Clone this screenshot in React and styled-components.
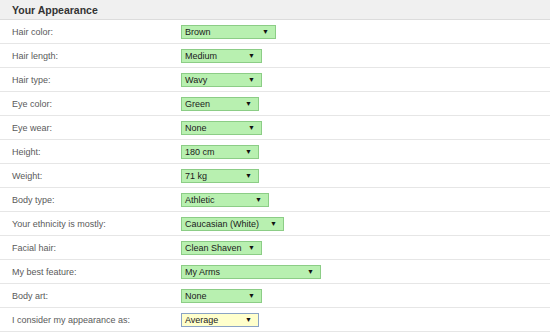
import React from 'react';
import styled, {createGlobalStyle} from 'styled-components';

const GlobalStyle = createGlobalStyle`
  body {
    margin: 0;
    background: #fff;
    font-family: "Liberation Sans", Arial, sans-serif;
  }
`

const fields = [
    {label: 'Hair color:', value: 'Brown', width: 95},
    {label: 'Hair length:', value: 'Medium', width: 81},
    {label: 'Hair type:', value: 'Wavy', width: 81},
    {label: 'Eye color:', value: 'Green', width: 78},
    {label: 'Eye wear:', value: 'None', width: 81},
    {label: 'Height:', value: '180 cm', width: 78},
    {label: 'Weight:', value: '71 kg', width: 78},
    {label: 'Body type:', value: 'Athletic', width: 88},
    {label: 'Your ethnicity is mostly:', value: 'Caucasian (White)', width: 103},
    {label: 'Facial hair:', value: 'Clean Shaven', width: 81},
    {label: 'My best feature:', value: 'My Arms', width: 140},
    {label: 'Body art:', value: 'None', width: 81},
    {label: 'I consider my appearance as:', value: 'Average', width: 78, focused: true},
]

const App = () => {
    return (
        <>
            <GlobalStyle/>
            <Panel>
                <Header>Your Appearance</Header>
                {fields.map((f) => (
                    <Row key={f.label}>
                        <Label>{f.label}</Label>
                        <FakeSelect $width={f.width} $focused={f.focused}>
                            <span>{f.value}</span>
                            <Arrow>▼</Arrow>
                        </FakeSelect>
                    </Row>
                ))}
            </Panel>
        </>
    )
}
export default App

const Panel = styled.div`
  width: 550px;
  display: flex;
  flex-direction: column;
`

const Header = styled.div`
  height: 20px;
  box-sizing: border-box;
  background: #f0f0f0;
  border-bottom: 1px solid #dcdcdc;
  padding-left: 12px;
  display: flex;
  align-items: center;
  font-size: 10.5px;
  font-weight: bold;
  color: #333;
`

const Row = styled.div`
  height: 24px;
  box-sizing: border-box;
  border-bottom: 1px solid #e6e6e6;
  display: flex;
  align-items: center;
  padding-left: 12px;
`

const Label = styled.div`
  width: 169px;
  font-size: 9px;
  color: #5a5a5a;
`

const FakeSelect = styled.div`
  width: ${(p) => p.$width}px;
  height: 14px;
  box-sizing: border-box;
  display: flex;
  align-items: center;
  justify-content: space-between;
  padding: 0 6px 0 3px;
  font-size: 9px;
  color: #1a1a1a;
  background: ${(p) => (p.$focused ? '#ffffcc' : '#b8f0b0')};
  border: 1px solid ${(p) => (p.$focused ? '#8aa3c4' : '#8ccd86')};
`

const Arrow = styled.span`
  font-size: 7px;
  color: #111;
`
